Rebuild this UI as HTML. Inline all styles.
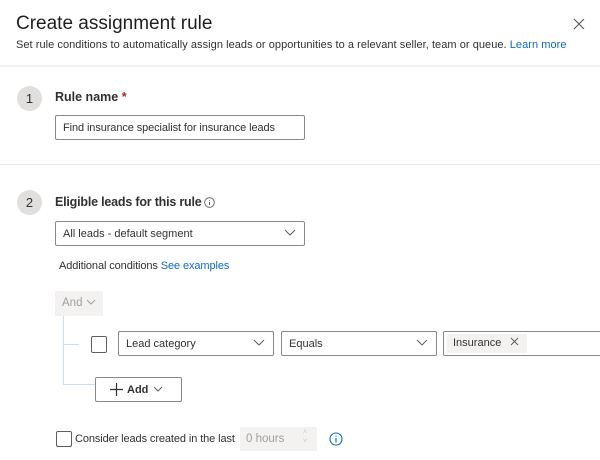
<!DOCTYPE html>
<html><head><style>
*{box-sizing:border-box;margin:0;padding:0}
body{width:600px;height:460px;overflow:hidden;background:#fff;font-family:"Liberation Sans",sans-serif;color:#323130;position:relative}
.a{position:absolute;white-space:nowrap}
.box{position:absolute;border:1px solid #8a8886;border-radius:2px;background:#fff;font-size:11px;padding-left:7px;display:flex;align-items:center;white-space:nowrap}
.circ{position:absolute;width:25px;height:25px;border-radius:50%;background:#e1dfdd;font-size:13px;display:flex;align-items:center;justify-content:center}
.chev{position:absolute;right:8px;top:7px}
</style></head><body>
<div class="a" style="left:16px;top:13px;font-size:19px;color:#201f1e">Create assignment rule</div>
<div class="a" style="left:16px;top:39px;font-size:11px;letter-spacing:0.05px;color:#323130">Set rule conditions to automatically assign leads or opportunities to a relevant seller, team or queue. <span style="color:#0f6cbd">Learn more</span></div>
<svg class="a" style="left:573px;top:18px" width="12" height="12"><path d="M1 1L11 11M11 1L1 11" stroke="#605e5c" stroke-width="1.2"/></svg>
<div class="a" style="left:0;top:65px;width:600px;height:2px;background:#f3f2f1"></div>
<div class="circ" style="left:17px;top:86px">1</div>
<div class="a" style="left:55px;top:90px;font-size:12.5px;font-weight:bold">Rule name <span style="color:#a4262c">*</span></div>
<div class="box" style="left:55px;top:115px;width:250px;height:25px;letter-spacing:-0.1px">Find insurance specialist for insurance leads</div>
<div class="a" style="left:0;top:164px;width:600px;height:1px;background:#edebe9"></div>
<div class="circ" style="left:17px;top:190px">2</div>
<div class="a" style="left:55px;top:195px;font-size:12.5px;font-weight:bold;letter-spacing:-0.2px">Eligible leads for this rule</div>
<svg class="a" style="left:204px;top:197px" width="11" height="11"><circle cx="5.5" cy="5.5" r="4.8" fill="none" stroke="#605e5c" stroke-width="0.9"/><path d="M5.5 5v3M5.5 3v.8" stroke="#605e5c"/></svg>
<div class="box" style="left:55px;top:221px;width:250px;height:25px">All leads - default segment<svg class="chev" width="12" height="8"><path d="M1 1l5 5 5-5" fill="none" stroke="#605e5c"/></svg></div>
<div class="a" style="left:59px;top:260px;font-size:11px;letter-spacing:-0.1px">Additional conditions <span style="color:#0f6cbd">See examples</span></div>
<div class="a" style="left:55px;top:291px;width:48px;height:25px;background:#f3f2f1;font-size:11.5px;color:#a19f9d;padding:6px 0 0 7px">And <svg width="10" height="7"><path d="M1 1l4 4 4-4" fill="none" stroke="#a19f9d"/></svg></div>
<div class="a" style="left:63px;top:316px;width:1px;height:69px;background:#c7e0f4"></div>
<div class="a" style="left:63px;top:344px;width:16px;height:1px;background:#c7e0f4"></div>
<div class="a" style="left:63px;top:384px;width:32px;height:1px;background:#c7e0f4"></div>
<div class="a" style="left:91px;top:336px;width:16px;height:17px;border:1px solid #605e5c;border-radius:2px"></div>
<div class="box" style="left:118px;top:331px;width:156px;height:25px">Lead category<svg class="chev" width="12" height="8"><path d="M1 1l5 5 5-5" fill="none" stroke="#605e5c"/></svg></div>
<div class="box" style="left:281px;top:331px;width:156px;height:25px">Equals<svg class="chev" width="12" height="8"><path d="M1 1l5 5 5-5" fill="none" stroke="#605e5c"/></svg></div>
<div class="box" style="left:443px;top:331px;width:170px;height:25px;padding-left:3px"><div style="background:#f3f2f1;height:19px;width:80px;font-size:11px;padding:3px 0 0 6px;white-space:nowrap">Insurance<svg width="9" height="9" style="margin-left:9px"><path d="M1 1l7 7M8 1L1 8" stroke="#605e5c"/></svg></div></div>
<div class="box" style="left:95px;top:377px;width:87px;height:25px;padding-left:14px;font-weight:bold">
<svg width="13" height="13" style="margin-right:4px"><path d="M6.5 0v13M0 6.5h13" stroke="#323130" stroke-width="1.2"/></svg>Add <svg width="10" height="7" style="margin-left:5px"><path d="M1 1l4 4 4-4" fill="none" stroke="#605e5c"/></svg></div>
<div class="a" style="left:56px;top:431px;width:16px;height:16px;border:1px solid #605e5c;border-radius:2px"></div>
<div class="a" style="left:75px;top:433px;font-size:11px;letter-spacing:-0.1px">Consider leads created in the last</div>
<div class="a" style="left:240px;top:427px;width:77px;height:24px;background:#f3f2f1;font-size:11.5px;color:#a19f9d;padding:6px 0 0 6px">0 hours</div>
<div class="a" style="left:303px;top:428px;font-size:7px;color:#c8c6c4;line-height:9px">˄<br>˅</div>
<svg class="a" style="left:329px;top:432px" width="14" height="14"><circle cx="7" cy="7" r="6" fill="none" stroke="#0f6cbd" stroke-width="1.1"/><path d="M7 6v4.5M7 3.6v1" stroke="#0f6cbd" stroke-width="1.2"/></svg>
</body></html>
